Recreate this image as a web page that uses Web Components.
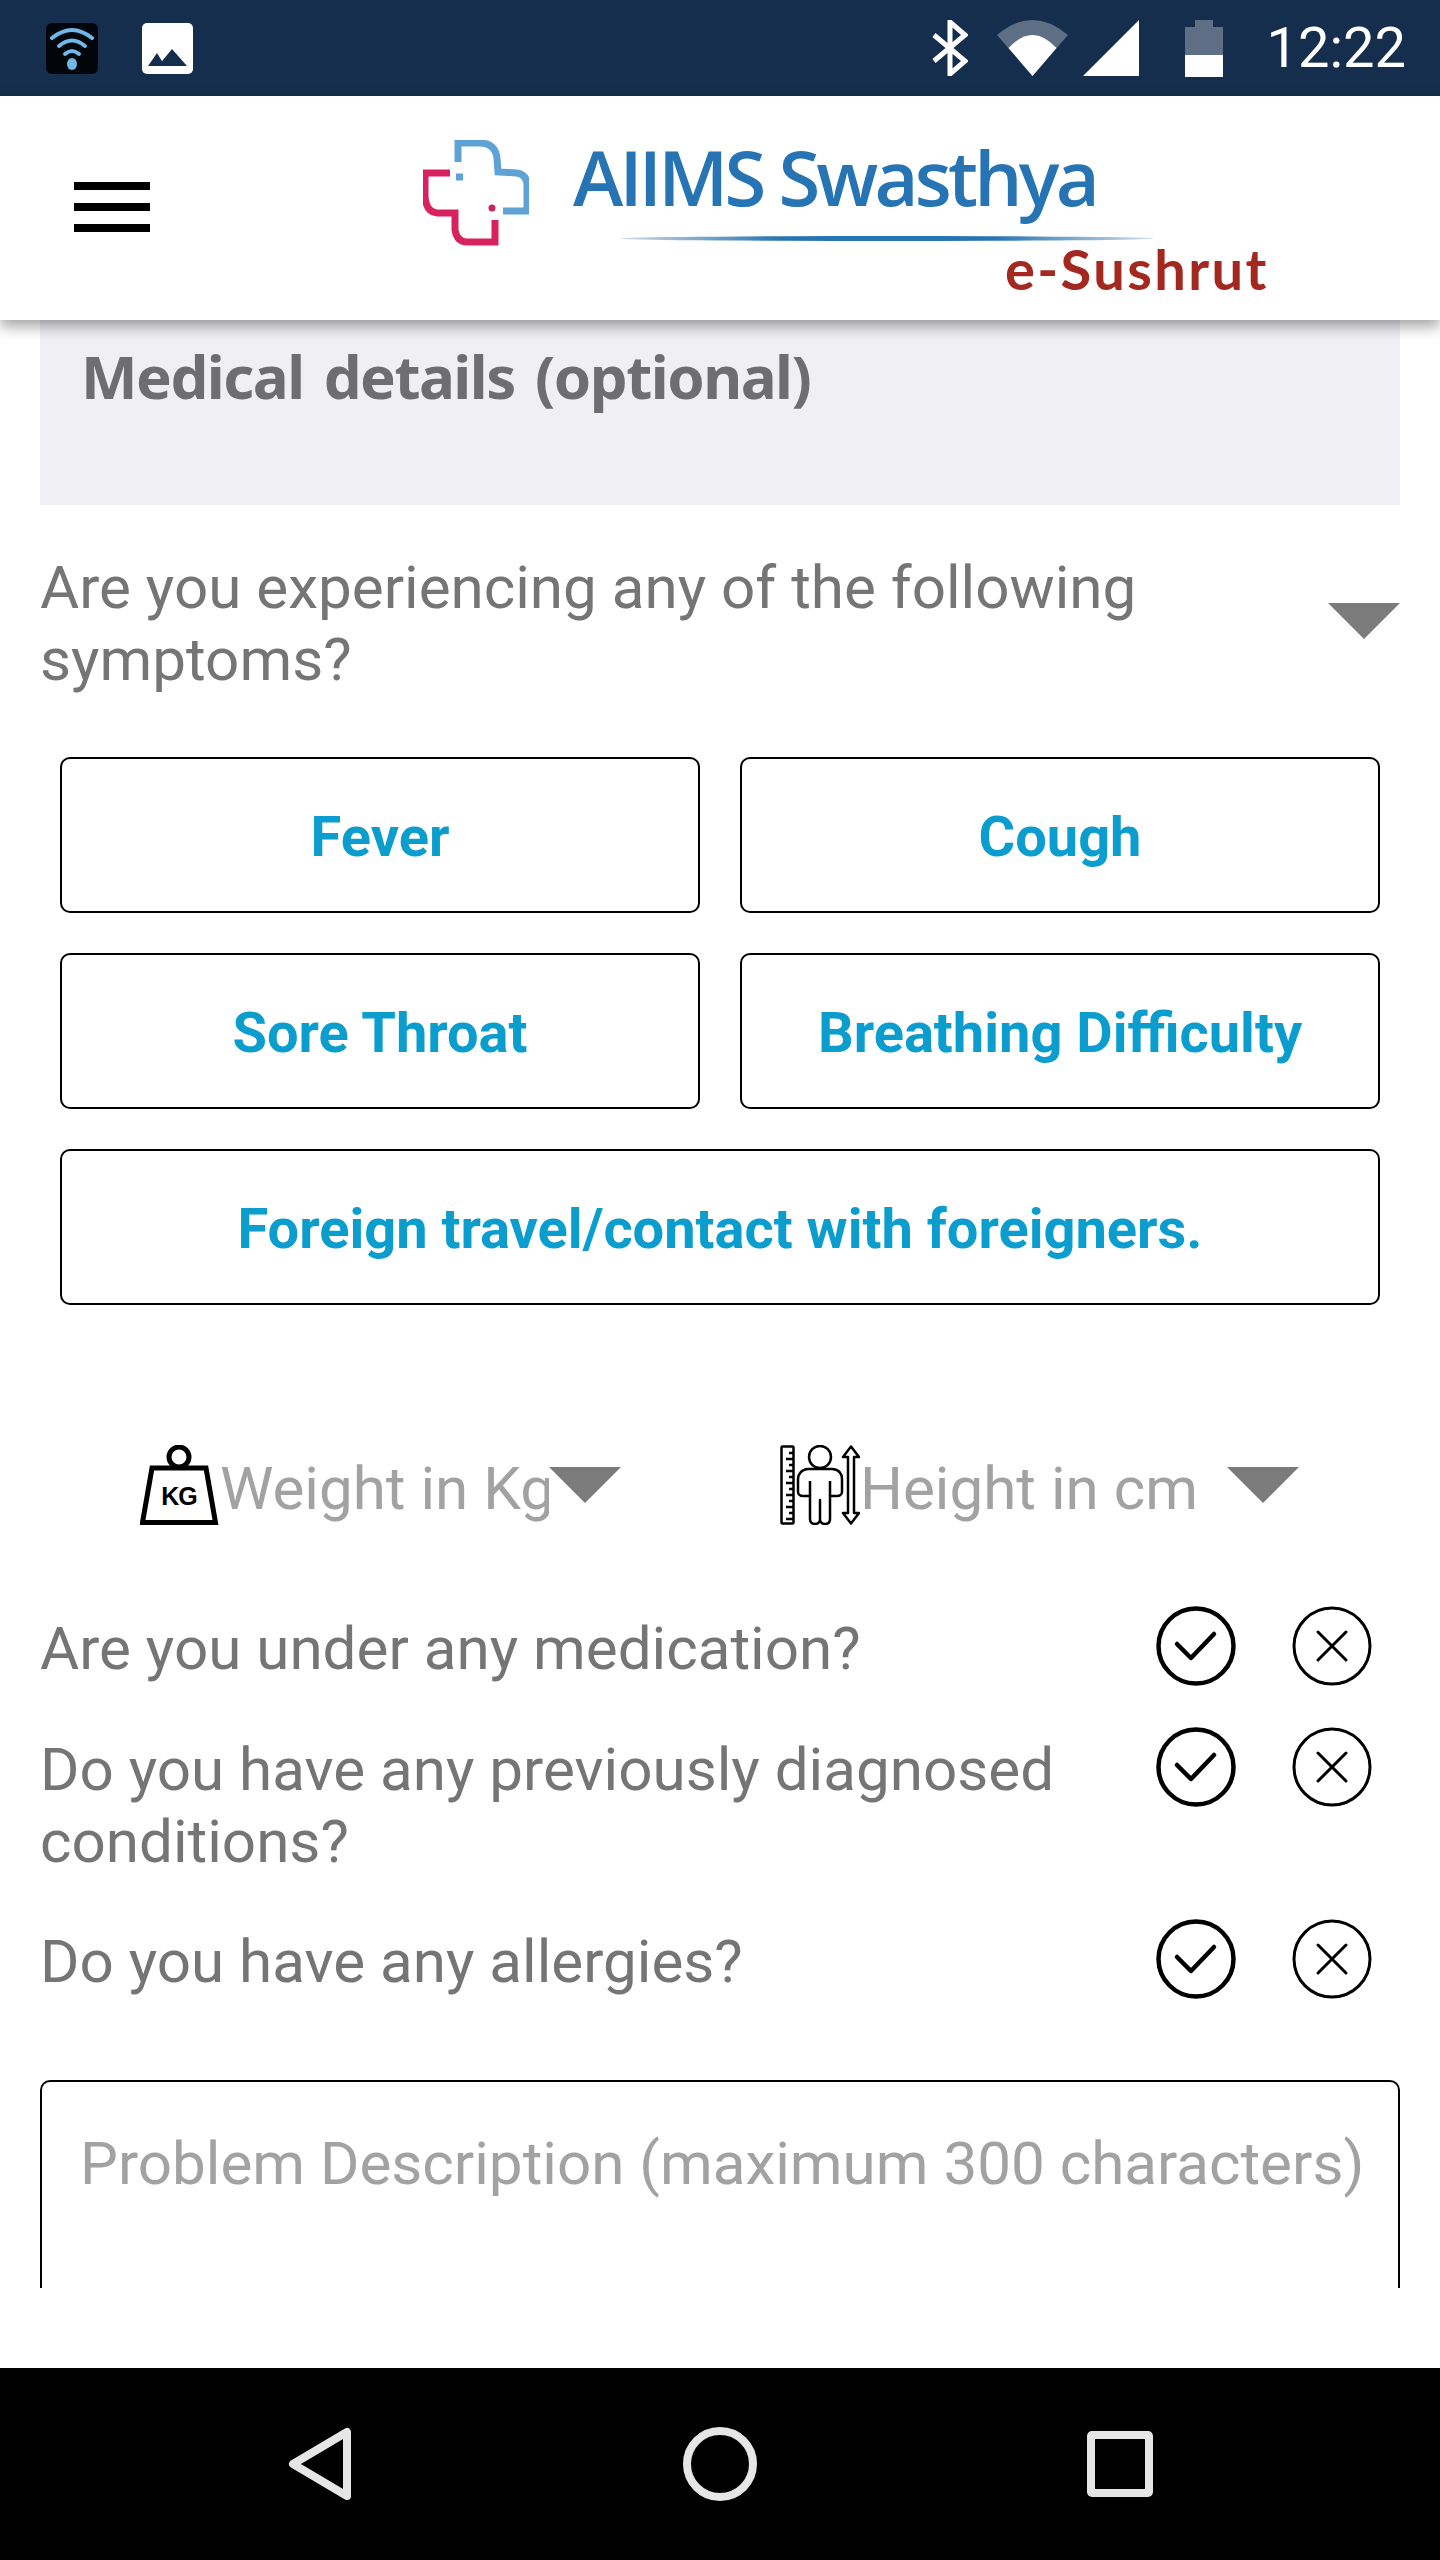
<!DOCTYPE html>
<html>
<head>
<meta charset="utf-8">
<style>
  html, body { margin: 0; padding: 0; background: #fff; }
  body { font-family: Roboto, "Liberation Sans", sans-serif; }
</style>
</head>
<body>
<phone-screen>
  <status-bar slot="status"></status-bar>
  <app-header slot="header"></app-header>
  <panel-title>Medical details (optional)</panel-title>
  <select-question>Are you experiencing any of the following symptoms?</select-question>
  <chip-grid>
    <chip-button>Fever</chip-button>
    <chip-button>Cough</chip-button>
    <chip-button>Sore Throat</chip-button>
    <chip-button>Breathing Difficulty</chip-button>
    <chip-button wide>Foreign travel/contact with foreigners.</chip-button>
  </chip-grid>
  <measure-row>
    <measure-field icon="weight" label="Weight in Kg" style="--label-w:329px"></measure-field>
    <measure-field icon="height" label="Height in cm" style="--label-w:367px"></measure-field>
  </measure-row>
  <yes-no-row>Are you under any medication?</yes-no-row>
  <yes-no-row>Do you have any previously diagnosed conditions?</yes-no-row>
  <yes-no-row>Do you have any allergies?</yes-no-row>
  <problem-box>Problem Description (maximum 300 characters)</problem-box>
  <nav-bar slot="nav"></nav-bar>
</phone-screen>

<script>
  const ARROW = `<svg width="72" height="36" viewBox="0 0 72 36"><path d="M0 0H72L36 36Z" fill="#7b7b7b"/></svg>`;

  class PhoneScreen extends HTMLElement {
    constructor() {
      super();
      this.attachShadow({ mode: "open" }).innerHTML = `
      <style>
        :host { display: flex; flex-direction: column; width: 1440px; height: 2560px; overflow: hidden; background: #fff; }
        .scroll { height: 1968px; box-sizing: border-box; padding: 0 40px; overflow: hidden; }
        .gap { height: 80px; background: #fff; }
      </style>
      <slot name="status"></slot>
      <slot name="header"></slot>
      <div class="scroll"><slot></slot></div>
      <div class="gap"></div>
      <slot name="nav"></slot>`;
    }
  }

  class StatusBar extends HTMLElement {
    constructor() {
      super();
      this.attachShadow({ mode: "open" }).innerHTML = `
      <style>
        :host { display: flex; align-items: center; height: 96px; background: #152e4d; color: #fff; padding: 0 34px 0 46px; box-sizing: border-box; font: 400 56px Roboto, sans-serif; }
        svg { display: block; flex: none; }
        .left { display: flex; gap: 44px; margin-right: auto; }
        .right { display: flex; align-items: center; }
        .time { margin-left: 44px; line-height: 96px; }
      </style>
      <div class="left">
        <svg width="52" height="51" viewBox="0 0 52 51">
          <rect width="52" height="51" rx="6" fill="#02060b"/>
          <g fill="none" stroke="#6fb8e8" stroke-width="4" stroke-linecap="round">
            <path d="M6 15Q26 -1 46 15"/><path d="M13 23Q26 12 39 23"/><path d="M19 31Q26 25 33 31"/>
          </g>
          <ellipse cx="26" cy="41" rx="5" ry="6" fill="#6fb8e8"/>
        </svg>
        <svg width="51" height="51" viewBox="0 0 51 51">
          <rect width="51" height="51" rx="5" fill="#fff"/>
          <path d="M6 43L15 30L23 43ZM16 43L30 26L45 43Z" fill="#152e4d"/>
        </svg>
      </div>
      <div class="right">
        <svg width="36" height="56" viewBox="0 0 36 56" fill="none" stroke="#fff" stroke-width="5"><path d="M2 15L33 41L18 54V2L33 15L2 41"/></svg>
        <svg style="margin-left:29px" width="71" height="56" viewBox="0 0 71 56"><path d="M35.5 56L0 15Q35.5 -15 71 15Z" fill="#5e6f85"/><path d="M35.5 56L11.5 28Q35.5 2 59.5 28Z" fill="#fff"/></svg>
        <svg style="margin-left:15px" width="56" height="56" viewBox="0 0 56 56"><path d="M0 56L56 0V56Z" fill="#fff"/></svg>
        <svg style="margin-left:46px" width="38" height="57" viewBox="0 0 38 57"><path d="M10 0H28V7H38V35H0V7H10Z" fill="#5e6f85"/><rect y="35" width="38" height="22" fill="#fff"/></svg>
        <span class="time">12:22</span>
      </div>`;
    }
  }

  class AppHeader extends HTMLElement {
    constructor() {
      super();
      this.attachShadow({ mode: "open" }).innerHTML = `
      <style>
        :host { display: flex; position: relative; z-index: 2; height: 224px; background: #fff; box-shadow: 0 6px 14px rgba(0,0,0,.38); padding-left: 74px; box-sizing: border-box; }
        .menu { display: flex; flex-direction: column; gap: 13px; margin-top: 86px; }
        .menu i { display: block; width: 76px; height: 8px; background: #000; }
        .logo { display: flex; margin: 44px 0 0 273px; filter: blur(.7px); }
        .words { margin-left: 44px; width: 694px; }
        .name { font: 600 76px/76px "Open Sans", sans-serif; letter-spacing: -3.8px; color: #2674b4; height: 97px; margin-top: -1px; white-space: nowrap; }
        .rule { height: 5px; width: 534px; margin-left: 47px; border-radius: 50%; background: linear-gradient(90deg, rgba(30,70,110,.2), #2674b4 30%, #2674b4 70%, rgba(30,90,140,.2)); }
        .sub { font: 700 56px/56px Lato, sans-serif; letter-spacing: 2.4px; color: #a3281f; margin: 0 0 0 432px; white-space: nowrap; }
      </style>
      <div class="menu"><i></i><i></i><i></i></div>
      <div class="logo">
        <svg width="106" height="106" viewBox="0 0 106 106" fill="none" stroke-width="7">
          <path d="M35 22V3H57Q72 3 74 18L75 32L94 33Q104 35 104 45V71H80" stroke="#5fa3d6"/>
          <path d="M33 37H40" stroke="#5fa3d6"/>
          <path d="M27 33H2V56Q3 72 14 73H32V90Q34 102 44 102H72V80" stroke="#d8215f"/>
          <circle cx="69" cy="68" r="3.5" fill="#c6245e"/>
        </svg>
        <div class="words">
          <div class="name">AIIMS Swasthya</div>
          <div class="rule"></div>
          <div class="sub">e-Sushrut</div>
        </div>
      </div>`;
    }
  }

  class PanelTitle extends HTMLElement {
    constructor() {
      super();
      this.attachShadow({ mode: "open" }).innerHTML = `
      <style>
        :host { display: block; height: 185px; box-sizing: border-box; padding: 20px 0 0 41px; background: #efeff4; color: #6d6d72; font: 700 60px/72px "Noto Sans", sans-serif; letter-spacing: -1.5px; word-spacing: 6px; white-space: nowrap; }
      </style>
      <slot></slot>`;
    }
  }

  class SelectQuestion extends HTMLElement {
    constructor() {
      super();
      this.attachShadow({ mode: "open" }).innerHTML = `
      <style>
        :host { display: flex; justify-content: space-between; margin-top: 47px; color: #757575; font: 400 60.15px/72px Roboto, sans-serif; }
        .text { width: 1150px; }
        svg { display: block; margin-top: 51px; }
      </style>
      <div class="text"><slot></slot></div>${ARROW}`;
    }
  }

  class ChipGrid extends HTMLElement {
    constructor() {
      super();
      this.attachShadow({ mode: "open" }).innerHTML = `
      <style>
        :host { display: grid; grid-template-columns: 640px 640px; gap: 41px 40px; margin: 61px 20px 0; }
      </style>
      <slot></slot>`;
    }
  }

  class ChipButton extends HTMLElement {
    constructor() {
      super();
      this.attachShadow({ mode: "open" }).innerHTML = `
      <style>
        :host { display: flex; align-items: center; justify-content: center; height: 156px; margin-bottom: -1px; box-sizing: border-box; border: 2px solid #000; border-radius: 10px; color: #0a9dcd; font: 700 56px Roboto, sans-serif; padding-top: 4px; }
        :host([wide]) { grid-column: 1 / 3; }
      </style>
      <slot></slot>`;
    }
  }

  class MeasureRow extends HTMLElement {
    constructor() {
      super();
      this.attachShadow({ mode: "open" }).innerHTML = `
      <style>
        :host { display: grid; grid-template-columns: 640px 1fr; margin: 141px 0 81px 100px; }
      </style>
      <slot></slot>`;
    }
  }

  const MEASURE_ICONS = {
    weight: `<svg width="80" height="80" viewBox="0 0 80 80" fill="none" stroke="#000">
      <circle cx="39" cy="12" r="10" stroke-width="5"/>
      <path d="M12 23H66L75.500 77.500H2.500Z" stroke-width="5"/>
      <text x="39" y="60" text-anchor="middle" font-family="Liberation Sans, sans-serif" font-weight="700" font-size="25" letter-spacing="-1" fill="#000" stroke="none">KG</text>
    </svg>`,
    height: `<svg width="80" height="80" viewBox="0 0 80 80" fill="none" stroke="#000" stroke-width="2.500" stroke-linejoin="round">
      <rect x="1.500" y="1.500" width="12" height="77" rx="1"/>
      <path d="M13 8H9M13 14H6M13 20H9M13 26H6M13 32H9M13 38H6M13 44H9M13 50H6M13 56H9M13 62H6M13 68H9M13 74H6"/>
      <ellipse cx="40" cy="12" rx="11" ry="11"/>
      <path d="M28 24H52C59 24 62 29 62 34V47C62 50 59 51 57 51H50V74C50 78 47 79 45 79C42 79 40 77 40 74V55V74C40 77 38 79 35 79C32 79 30 77 30 74V51H23C20 51 18 49 18 47V34C18 29 22 24 28 24Z"/>
      <path d="M30 36V51M50 36V51"/>
      <path d="M71 1.500L79 12H74V68H79L71 78.500L63 68H68V12H63Z"/>
    </svg>`
  };

  class MeasureField extends HTMLElement {
    constructor() {
      super();
      this.attachShadow({ mode: "open" });
    }
    connectedCallback() {
      this.shadowRoot.innerHTML = `
      <style>
        :host { display: flex; color: #a2a2a2; font: 400 60.15px/80px Roboto, sans-serif; height: 80px; }
        svg { display: block; flex: none; }
        .label { width: var(--label-w); height: 80px; box-sizing: content-box; padding-top: 4px; overflow: hidden; white-space: nowrap; }
        .arrow { padding-top: 22px; }
      </style>
      ${MEASURE_ICONS[this.getAttribute("icon")]}
      <div class="label">${this.getAttribute("label")}</div>
      <div class="arrow">${ARROW}</div>`;
    }
  }

  class YesNoRow extends HTMLElement {
    constructor() {
      super();
      this.attachShadow({ mode: "open" }).innerHTML = `
      <style>
        :host { display: flex; margin-top: 41px; color: #757575; font: 400 60.15px/72px Roboto, sans-serif; }
        .text { width: 1116px; padding-top: 7px; padding-right: 40px; box-sizing: border-box; }
        svg { display: block; flex: none; }
        .no { margin-left: 56px; }
      </style>
      <div class="text"><slot></slot></div>
      <svg width="80" height="80" viewBox="0 0 80 80" fill="none" stroke="#000" stroke-linecap="round" stroke-linejoin="round">
        <circle cx="40" cy="40" r="37.500" stroke-width="4.500"/>
        <path d="M21 38L35 52L58 28" stroke-width="4.500"/>
      </svg>
      <svg class="no" width="80" height="80" viewBox="0 0 80 80" fill="none" stroke="#000" stroke-linecap="round">
        <circle cx="40" cy="40" r="38" stroke-width="3"/>
        <path d="M26 26L54 54M54 26L26 54" stroke-width="3"/>
      </svg>`;
    }
  }

  class ProblemBox extends HTMLElement {
    constructor() {
      super();
      this.attachShadow({ mode: "open" }).innerHTML = `
      <style>
        :host { display: block; height: 208px; box-sizing: border-box; margin-top: 81px; border: 2px solid #000; border-bottom: 0; border-radius: 10px 10px 0 0; padding: 46px 0 0 38px; color: #a2a2a2; font: 400 60.15px/72px Roboto, sans-serif; white-space: nowrap; }
      </style>
      <slot></slot>`;
    }
  }

  class NavBar extends HTMLElement {
    constructor() {
      super();
      this.attachShadow({ mode: "open" }).innerHTML = `
      <style>
        :host { display: grid; grid-template-columns: repeat(3, 400px); justify-content: center; align-items: center; height: 192px; background: #000; }
        div { display: flex; justify-content: center; }
        svg { display: block; }
      </style>
      <div><svg width="64" height="74" viewBox="0 0 64 74" fill="none" stroke="#e6e6e6" stroke-width="8" stroke-linejoin="round"><path d="M59 5V69L5 37Z"/></svg></div>
      <div><svg width="74" height="74" viewBox="0 0 74 74" fill="none" stroke="#e6e6e6" stroke-width="8"><circle cx="37" cy="37" r="33"/></svg></div>
      <div><svg width="66" height="66" viewBox="0 0 66 66" fill="none" stroke="#e6e6e6" stroke-width="8" stroke-linejoin="round"><rect x="4" y="4" width="58" height="58" rx="1"/></svg></div>`;
    }
  }

  customElements.define("phone-screen", PhoneScreen);
  customElements.define("status-bar", StatusBar);
  customElements.define("app-header", AppHeader);
  customElements.define("panel-title", PanelTitle);
  customElements.define("select-question", SelectQuestion);
  customElements.define("chip-grid", ChipGrid);
  customElements.define("chip-button", ChipButton);
  customElements.define("measure-row", MeasureRow);
  customElements.define("measure-field", MeasureField);
  customElements.define("yes-no-row", YesNoRow);
  customElements.define("problem-box", ProblemBox);
  customElements.define("nav-bar", NavBar);
</script>
</body>
</html>
